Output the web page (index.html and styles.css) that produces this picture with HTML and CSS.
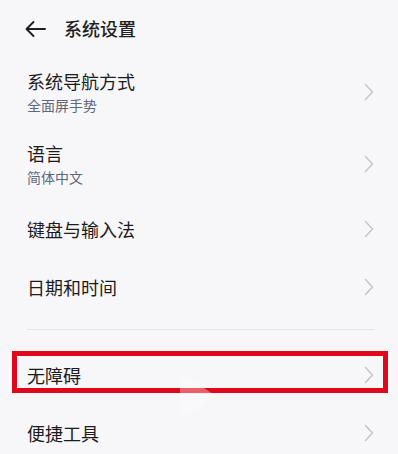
FILE: index.html
```html
<!DOCTYPE html>
<html lang="zh-CN">
<head>
<meta charset="utf-8">
<title>系统设置</title>
<link rel="stylesheet" href="styles.css">
</head>
<body>
<div class="screen">
  <header class="header">
    <svg class="back" width="22" height="18" viewBox="0 0 22 18" aria-hidden="true">
      <path d="M21 9H2.5M9.5 2L2.5 9l7 7" fill="none" stroke="#1f1f1f" stroke-width="1.9" stroke-linecap="round" stroke-linejoin="round"/>
    </svg>
    <h1 class="title">系统设置</h1>
  </header>

  <ul class="list">
    <li class="row row-double">
      <div class="text">
        <div class="label">系统导航方式</div>
        <div class="sub">全面屏手势</div>
      </div>
      <svg class="chev" width="12" height="18" viewBox="0 0 12 18" aria-hidden="true"><path d="M2.5 1.5L9.5 9l-7 7.5" fill="none" stroke="#c6c6ca" stroke-width="1.5" stroke-linecap="round" stroke-linejoin="round"/></svg>
    </li>
    <li class="row row-double">
      <div class="text">
        <div class="label">语言</div>
        <div class="sub">简体中文</div>
      </div>
      <svg class="chev" width="12" height="18" viewBox="0 0 12 18" aria-hidden="true"><path d="M2.5 1.5L9.5 9l-7 7.5" fill="none" stroke="#c6c6ca" stroke-width="1.5" stroke-linecap="round" stroke-linejoin="round"/></svg>
    </li>
    <li class="row">
      <div class="label">键盘与输入法</div>
      <svg class="chev" width="12" height="18" viewBox="0 0 12 18" aria-hidden="true"><path d="M2.5 1.5L9.5 9l-7 7.5" fill="none" stroke="#c6c6ca" stroke-width="1.5" stroke-linecap="round" stroke-linejoin="round"/></svg>
    </li>
    <li class="row">
      <div class="label">日期和时间</div>
      <svg class="chev" width="12" height="18" viewBox="0 0 12 18" aria-hidden="true"><path d="M2.5 1.5L9.5 9l-7 7.5" fill="none" stroke="#c6c6ca" stroke-width="1.5" stroke-linecap="round" stroke-linejoin="round"/></svg>
    </li>
  </ul>

  <div class="divider"></div>

  <ul class="list">
    <li class="row row-marked">
      <div class="label">无障碍</div>
      <svg class="chev" width="12" height="18" viewBox="0 0 12 18" aria-hidden="true"><path d="M2.5 1.5L9.5 9l-7 7.5" fill="none" stroke="#c6c6ca" stroke-width="1.5" stroke-linecap="round" stroke-linejoin="round"/></svg>
      <span class="mark"></span>
    </li>
    <li class="row">
      <div class="label">便捷工具</div>
      <svg class="chev" width="12" height="18" viewBox="0 0 12 18" aria-hidden="true"><path d="M2.5 1.5L9.5 9l-7 7.5" fill="none" stroke="#c6c6ca" stroke-width="1.5" stroke-linecap="round" stroke-linejoin="round"/></svg>
    </li>
  </ul>

  <svg class="watermark" width="40" height="52" viewBox="0 0 40 52" aria-hidden="true"><path d="M2 2L38 26 2 50z" fill="#ffffff"/></svg>
</div>
</body>
</html>
```

FILE: styles.css
```css
* {
  box-sizing: border-box;
}

html, body {
  margin: 0;
  padding: 0;
  background: #f7f7f9;
}

body {
  font-family: "Noto Sans CJK SC", "Noto Sans", "Liberation Sans", sans-serif;
  color: #1c1c1e;
}

.screen {
  position: relative;
  width: 398px;
  height: 454px;
  overflow: hidden;
  background: #f7f7f9;
}

.header {
  height: 56px;
  display: flex;
  align-items: center;
  padding-left: 24px;
  gap: 18px;
}

.back {
  display: block;
  margin-top: 1px;
}

.title {
  margin: 0;
  font-size: 18px;
  font-weight: 500;
  line-height: 24px;
  color: #1f1f1f;
}

.list {
  list-style: none;
  margin: 0;
  padding: 0;
}

.row {
  position: relative;
  height: 58px;
  display: flex;
  align-items: center;
  justify-content: space-between;
  padding: 0 23px 0 27px;
}

.row-double {
  height: 72px;
}

.text {
  display: flex;
  flex-direction: column;
  gap: 2px;
}

.label {
  font-size: 18px;
  line-height: 24px;
  color: #1c1c1e;
}

.sub {
  font-size: 14px;
  line-height: 20px;
  color: #62677a;
}

.chev {
  display: block;
  flex: none;
}

.divider {
  height: 1px;
  margin: 13px 24px 16px 27px;
  background: #e4e4e8;
}

.mark {
  position: absolute;
  left: 12px;
  right: 10px;
  top: 5px;
  height: 42px;
  border: 5px solid #e0071a;
  pointer-events: none;
}

.watermark {
  position: absolute;
  left: 178px;
  top: 370px;
  opacity: 0.35;
}
```
